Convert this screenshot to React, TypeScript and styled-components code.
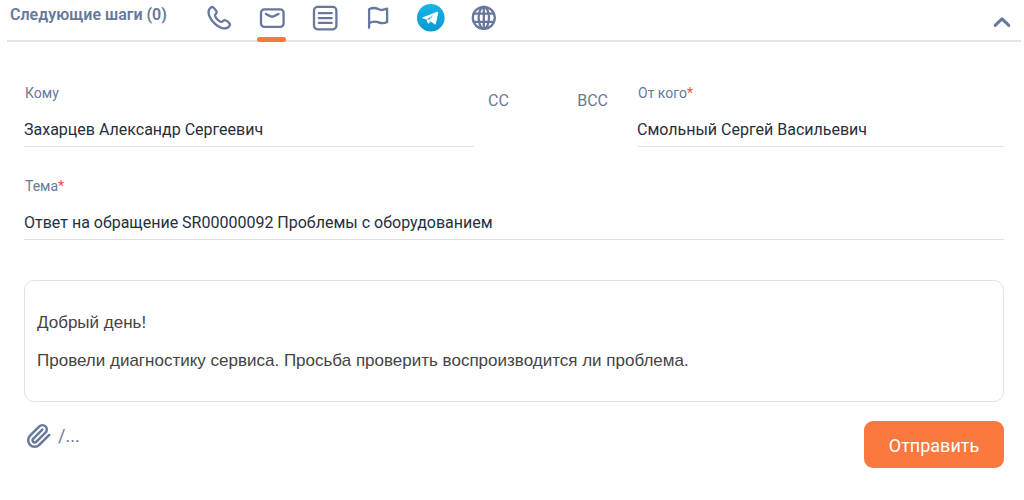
import React from "react";
import styled, { createGlobalStyle } from "styled-components";

const slate = "#68789a";
const orange = "#fb783e";
const line = "#e1e2e4";

const GlobalStyle = createGlobalStyle`
  *, *::before, *::after { box-sizing: border-box; }
  body {
    margin: 0;
    background: #fff;
    font-family: Roboto, "Noto Sans", sans-serif;
  }
  button, input, textarea { font-family: inherit; }
`;

const Header = styled.header`
  display: flex;
  align-items: center;
  height: 42px;
  margin: 0 3px 0 7px;
  padding: 0 10px 0 3px;
  border-bottom: 2px solid #e1e3e9;
`;

const Title = styled.h1`
  width: 182px;
  margin: 0;
  padding-bottom: 10px;
  font-size: 16px;
  line-height: 20px;
  font-weight: 600;
  color: ${slate};
  white-space: nowrap;
`;

const Actions = styled.nav`
  display: flex;
  flex: 1;
  align-self: stretch;
`;

const IconButton = styled.button<{ $active?: boolean }>`
  position: relative;
  display: flex;
  justify-content: center;
  width: 53px;
  padding: 4px 0 0;
  border: 0;
  background: none;
  color: ${slate};
  cursor: pointer;

  &::after {
    content: "";
    display: ${(p) => (p.$active ? "block" : "none")};
    position: absolute;
    left: 12px;
    right: 12px;
    bottom: -2px;
    height: 5px;
    border-radius: 3px;
    background: ${orange};
  }
`;

const Collapse = styled.button`
  display: flex;
  padding: 4px 0 0;
  border: 0;
  background: none;
  color: ${slate};
  cursor: pointer;
`;

const Form = styled.form`
  padding: 41px 20px 24px 24px;
`;

const Recipients = styled.div`
  display: grid;
  grid-template-columns: 450fr 120px 382fr;
  column-gap: 14px;
  margin-bottom: 29px;
`;

const Copies = styled.div`
  display: flex;
  justify-content: space-between;
  align-items: flex-start;
  padding-top: 8px;
`;

const CopyButton = styled.button`
  padding: 0;
  border: 0;
  background: none;
  font-size: 16px;
  line-height: 20px;
  color: ${slate};
  cursor: pointer;
`;

const Field = styled.div<{ $indent?: boolean }>`
  display: flex;
  flex-direction: column;
  margin-left: ${(p) => (p.$indent ? "15px" : "0")};
`;

const Label = styled.label`
  padding: 0 1px;
  font-size: 14px;
  line-height: 20px;
  color: ${slate};
`;

const Required = styled.span`
  color: #f0503c;
`;

const Input = styled.input`
  width: 100%;
  height: 44px;
  padding: 9px 0 0;
  border: 0;
  border-bottom: 1px solid ${line};
  outline: 0;
  background: none;
  font-size: 16px;
  color: #262f40;
`;

const Editor = styled.textarea`
  display: block;
  width: 100%;
  height: 122px;
  margin-top: 40px;
  padding: 32px 12px 30px;
  border: 1px solid ${line};
  border-radius: 10px;
  outline: 0;
  resize: none;
  overflow: hidden;
  && { font-family: "Liberation Sans", Arial, sans-serif; }
  font-size: 17px;
  line-height: 19px;
  color: #444;
`;

const Footer = styled.footer`
  display: flex;
  justify-content: space-between;
  align-items: flex-start;
  margin-top: 19px;
`;

const Tools = styled.div`
  display: flex;
  gap: 6px;
  padding-left: 2px;
`;

const ToolButton = styled.button`
  display: flex;
  align-items: center;
  height: 30px;
  padding: 0;
  border: 0;
  background: none;
  font-size: 18px;
  line-height: 30px;
  color: ${slate};
  cursor: pointer;
`;

const SendButton = styled.button`
  width: 140px;
  height: 47px;
  padding: 2px 0 0;
  border: 0;
  border-radius: 9px;
  background: ${orange};
  font-size: 18px;
  color: #fff;
  cursor: pointer;
`;

const Stroke = styled.svg<{ $weight?: number }>`
  display: block;
  flex: none;
  fill: none;
  stroke: currentColor;
  stroke-width: ${(p) => p.$weight ?? 2.3};
  stroke-linecap: round;
  stroke-linejoin: round;
`;

const PhoneIcon = () => (
  <Stroke width="28" height="28" viewBox="0 0 28 28">
    <path d="M4.4 5.2C5.6 3.6 7 2.4 8.2 3.3C9.6 4.4 11 6.4 11.6 7.8C12.2 9.4 9.9 10.3 10 11.7C10.2 13.7 14.1 17.7 16.2 17.9C17.7 18 18.5 15.7 20.2 16.3C21.7 16.9 23.7 18.3 24.7 19.7C25.6 21 24.3 22.4 22.8 23.5C19.6 25.8 13.8 23.7 9.2 19.1C4.5 14.4 2.1 8.4 4.4 5.2Z" />
  </Stroke>
);

const MailIcon = () => (
  <Stroke width="28" height="28" viewBox="0 0 28 28">
    <rect x="3" y="5.3" width="22.6" height="17.6" rx="3.4" />
    <path d="M7.9 10L12.1 12.1Q14.1 13 16.1 12.1L20.5 10" />
  </Stroke>
);

const ListIcon = () => (
  <Stroke width="28" height="28" viewBox="0 0 28 28">
    <rect x="3" y="2.9" width="22.4" height="22.4" rx="3.6" />
    <path d="M7.8 9.2H20.7M7.8 14.1H20.7M7.8 18.9H20.7" />
  </Stroke>
);

const FlagIcon = () => (
  <Stroke width="28" height="28" viewBox="0 0 28 28">
    <path d="M5.1 23.8V5.2C10 2.7 12.8 4.4 15 5.3C17.7 6.3 20.5 6 23.1 4.6V18C20.2 19.6 17.5 19.5 14.7 18.4C11.8 17.2 8.5 17.4 5.1 19.1" />
  </Stroke>
);

const TelegramIcon = () => (
  <svg width="28" height="28" viewBox="0 0 28 28">
    <defs>
      <linearGradient id="telegram-blue" x1="0" y1="0" x2="0" y2="1">
        <stop offset="0" stopColor="#18b4e6" />
        <stop offset="1" stopColor="#0899d2" />
      </linearGradient>
    </defs>
    <circle cx="13.8" cy="13.8" r="13.8" fill="url(#telegram-blue)" />
    <path
      d="M5.3 13.4L20.2 7.7Q21.3 7.4 21.2 8.6L18.9 19.8Q18.6 21 17.5 20.3L13.8 17.6L12 19.3Q11 20.1 10.7 18.9L9.5 15.5L5.5 14.3Q4.6 13.9 5.3 13.4Z"
      fill="#fff"
    />
    <path d="M12.2 16.3L11.2 19.5L13.8 17.6Z" fill="#b9e0f2" />
    <path d="M9.9 15.2L16.8 10.8L12 15.9Z" fill="#3fb5e0" />
  </svg>
);

const GlobeIcon = () => (
  <Stroke width="28" height="28" viewBox="0 0 28 28">
    <circle cx="13.8" cy="13.8" r="11" />
    <ellipse cx="13.8" cy="13.8" rx="5.2" ry="11" />
    <path d="M3.7 9.7H23.9M3.7 17.9H23.9M13.8 2.8V24.8" />
  </Stroke>
);

const ChevronIcon = () => (
  <Stroke width="18" height="18" viewBox="0 0 18 18" $weight={3}>
    <path d="M2.2 12.4L9 5.8L15.8 12.4" />
  </Stroke>
);

const ClipIcon = () => (
  <Stroke width="26" height="26" viewBox="0 0 24 24" $weight={2.3}>
    <path d="M21.44 11.05L12.25 20.24A6 6 0 0 1 3.76 11.75L12.33 3.18A4 4 0 1 1 18 8.84L9.41 17.41A2 2 0 0 1 6.58 14.58L15.07 6.1" />
  </Stroke>
);

const actions = [
  { name: "Звонок", icon: <PhoneIcon /> },
  { name: "Письмо", icon: <MailIcon />, active: true },
  { name: "Заметка", icon: <ListIcon /> },
  { name: "Задача", icon: <FlagIcon /> },
  { name: "Telegram", icon: <TelegramIcon /> },
  { name: "Портал", icon: <GlobeIcon /> },
];

export default function App() {
  return (
    <>
      <GlobalStyle />
      <Header>
        <Title>Следующие шаги (0)</Title>
        <Actions>
          {actions.map((a) => (
            <IconButton key={a.name} type="button" aria-label={a.name} $active={a.active}>
              {a.icon}
            </IconButton>
          ))}
        </Actions>
        <Collapse type="button" aria-label="Свернуть">
          <ChevronIcon />
        </Collapse>
      </Header>
      <Form onSubmit={(e) => e.preventDefault()}>
        <Recipients>
          <Field>
            <Label htmlFor="to">Кому</Label>
            <Input id="to" defaultValue="Захарцев Александр Сергеевич" />
          </Field>
          <Copies>
            <CopyButton type="button">CC</CopyButton>
            <CopyButton type="button">BCC</CopyButton>
          </Copies>
          <Field $indent>
            <Label htmlFor="from">
              От кого<Required>*</Required>
            </Label>
            <Input id="from" required defaultValue="Смольный Сергей Васильевич" />
          </Field>
        </Recipients>
        <Field>
          <Label htmlFor="subject">
            Тема<Required>*</Required>
          </Label>
          <Input
            id="subject"
            required
            defaultValue="Ответ на обращение SR00000092 Проблемы с оборудованием"
          />
        </Field>
        <Editor
          aria-label="Текст письма"
          defaultValue={
            "Добрый день!\n\nПровели диагностику сервиса. Просьба проверить воспроизводится ли проблема."
          }
        />
        <Footer>
          <Tools>
            <ToolButton type="button" aria-label="Прикрепить файл">
              <ClipIcon />
            </ToolButton>
            <ToolButton type="button">/...</ToolButton>
          </Tools>
          <SendButton type="submit">Отправить</SendButton>
        </Footer>
      </Form>
    </>
  );
}
